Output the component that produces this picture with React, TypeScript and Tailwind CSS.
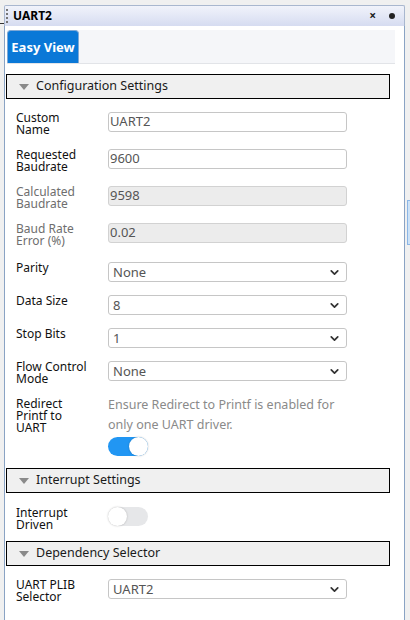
import { ChevronDown } from 'lucide-react';

const font = { fontFamily: '"Noto Sans", "Open Sans", Arial, sans-serif' };

function SectionHeader({ title }: { title: string }) {
  return (
    <div className="flex items-center h-[25px] w-[384px] bg-[#f0f0f0] border border-black">
      <svg width="10" height="6" viewBox="0 0 10 6" className="ml-[12px]">
        <polygon points="0,0 10,0 5,6" fill="#8a8a8a" />
      </svg>
      <span className="ml-[7px] text-[12.5px] text-[#1a1a1a] leading-none">{title}</span>
    </div>
  );
}

function Label({ children, muted }: { children: React.ReactNode; muted?: boolean }) {
  return (
    <div className={`w-[92px] shrink-0 text-[12px] leading-[12px] ${muted ? 'text-[#6e6e6e]' : 'text-[#111]'}`}>
      {children}
    </div>
  );
}

function TextInput({ value, disabled }: { value: string; disabled?: boolean }) {
  return (
    <div
      className={`w-[239px] h-[20px] rounded-[3px] border flex items-center pl-[1px] text-[13px] text-[#555] ${
        disabled ? 'bg-[#ececec] border-[#d2d2d2]' : 'bg-white border-[#c6c6c6]'
      }`}
    >
      {value}
    </div>
  );
}

function Select({ value }: { value: string }) {
  return (
    <div className="w-[239px] h-[20px] rounded-[3px] border border-[#c6c6c6] bg-white flex items-center justify-between pl-[4px] pr-[5px] text-[13px] text-[#555]">
      <span className="pt-[2px]">{value}</span>
      <ChevronDown size={13} strokeWidth={3.2} color="#333" />
    </div>
  );
}

function Toggle({ on }: { on: boolean }) {
  return (
    <div className={`w-[40px] h-[19px] rounded-full relative ${on ? 'bg-[#2196f3]' : 'bg-[#e6e7e9]'}`}>
      <div
        className={`absolute top-[0px] w-[19px] h-[19px] rounded-full bg-white shadow-[0_0_2px_rgba(0,0,0,0.25)] ${
          on ? 'right-[0px]' : 'left-[0px]'
        }`}
      />
    </div>
  );
}

function Row({ label, muted, children }: { label: React.ReactNode; muted?: boolean; children: React.ReactNode }) {
  return (
    <div className="flex items-start">
      <Label muted={muted}>{label}</Label>
      {children}
    </div>
  );
}

export default function App() {
  return (
    <div className="w-[410px] h-[620px] bg-[#f0f0f0] overflow-hidden relative" style={font}>
      {/* background IDE bits */}
      <div className="absolute left-0 top-[23px] w-[4px] h-[1px] bg-[#333]" />
      <div className="absolute right-0 top-[200px] w-[3px] h-[45px] bg-[#cde2f7] border border-r-0 border-[#8bb6e6]" />

      <div className="flex pt-[5px] pl-[4px]">
        <div className="w-[401px] h-[615px] flex flex-col">
          {/* title bar */}
          <div className="h-[21px] flex items-center border border-b-0 border-[#a9b7cf] rounded-t-[2px] bg-gradient-to-b from-[#f1f3fb] to-[#d6dcf1]">
            <div className="ml-[1px] w-[2px] h-[14px] border-l-2 border-dotted border-[#777]" />
            <span className="ml-[5px] text-[12px] font-bold text-black leading-none">UART2</span>
            <span className="ml-auto text-[12px] font-bold text-[#222] leading-none">×</span>
            <span className="ml-[13px] mr-[9px] w-[6px] h-[6px] rounded-full bg-[#222]" />
          </div>

          {/* body */}
          <div className="flex-1 bg-white border-l border-r border-[#8aa3c4] pl-[1px]">
            {/* tab strip */}
            <div className="mt-[4px] ml-[1px] w-[388px] h-[34px] bg-[#f5f6f9] border-b border-[#e2e4e8] flex items-end">
              <div className="h-[33px] w-[72px] bg-[#0a78d7] rounded-t-[4px] border border-b-0 border-[#7fa9d6] flex items-center justify-center">
                <span className="text-[13px] font-bold text-white leading-none">Easy View</span>
              </div>
            </div>

            <div className="mt-[10px]">
              <SectionHeader title="Configuration Settings" />
            </div>

            <div className="pl-[10px] pt-[13px] flex flex-col gap-[13px]">
              <Row label={<>Custom<br />Name</>}>
                <TextInput value="UART2" />
              </Row>
              <Row label={<>Requested<br />Baudrate</>}>
                <TextInput value="9600" />
              </Row>
              <Row label={<>Calculated<br />Baudrate</>} muted>
                <TextInput value="9598" disabled />
              </Row>
              <Row label={<>Baud Rate<br />Error (%)</>} muted>
                <TextInput value="0.02" disabled />
              </Row>
              <div className="mt-[2px]">
                <Row label="Parity">
                  <Select value="None" />
                </Row>
              </div>
              <Row label="Data Size">
                <Select value="8" />
              </Row>
              <Row label="Stop Bits">
                <Select value="1" />
              </Row>
              <Row label={<>Flow Control<br />Mode</>}>
                <Select value="None" />
              </Row>
              <Row label={<>Redirect<br />Printf to<br />UART</>}>
                <div className="flex flex-col">
                  <div className="text-[12.5px] leading-[20px] text-[#8a8a8a] -mt-[3px]">
                    Ensure Redirect to Printf is enabled for
                    <br />
                    only one UART driver.
                  </div>
                  <div className="mt-[2px]">
                    <Toggle on />
                  </div>
                </div>
              </Row>
            </div>

            <div className="mt-[12px]">
              <SectionHeader title="Interrupt Settings" />
            </div>

            <div className="pl-[10px] pt-[14px]">
              <Row label={<>Interrupt<br />Driven</>}>
                <Toggle on={false} />
              </Row>
            </div>

            <div className="mt-[10px]">
              <SectionHeader title="Dependency Selector" />
            </div>

            <div className="pl-[10px] pt-[13px]">
              <Row label={<>UART PLIB<br />Selector</>}>
                <Select value="UART2" />
              </Row>
            </div>
          </div>
        </div>
      </div>
    </div>
  );
}
